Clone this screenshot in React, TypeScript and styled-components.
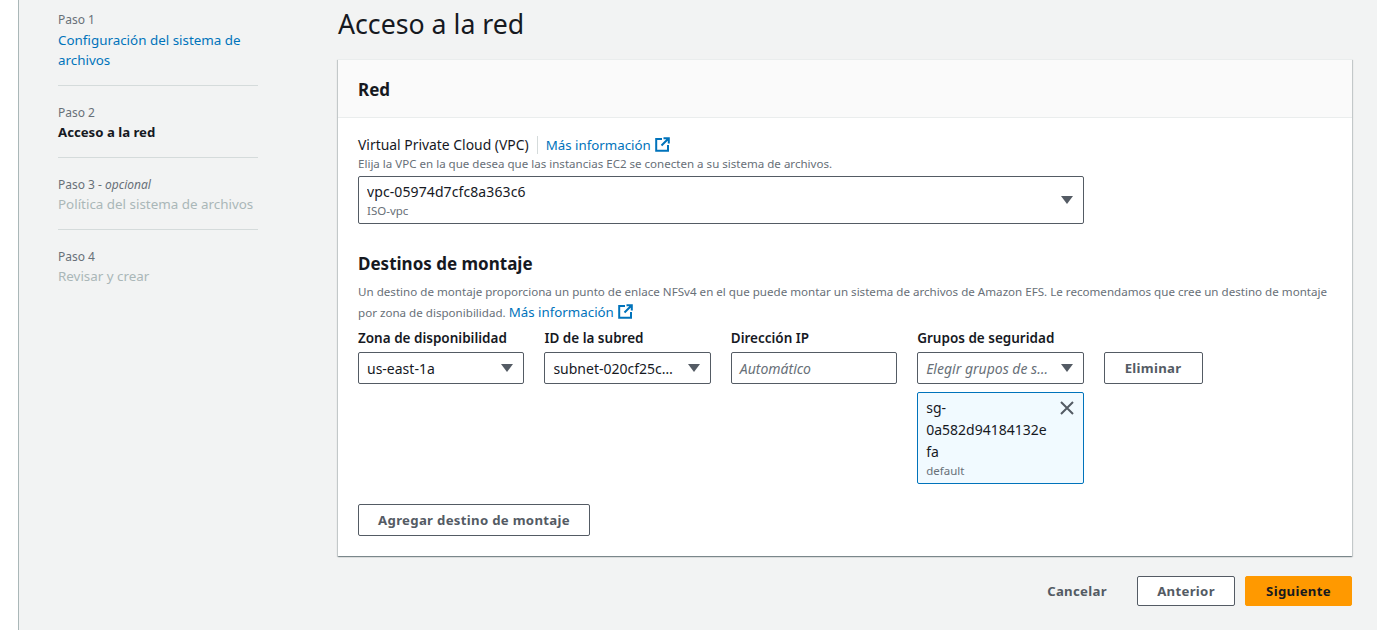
import * as React from 'react'
import styled, { createGlobalStyle } from 'styled-components'

const GlobalStyle = createGlobalStyle`
  html, body {
    margin: 0;
    padding: 0;
    height: 630px;
    overflow: hidden;
    background: #fff;
    color: #16191f;
    font-family: 'Noto Sans', 'Liberation Sans', sans-serif;
    font-size: 14px;
    line-height: 20px;
  }
  * { box-sizing: border-box; }
`

const Shell = styled.div`
  margin-left: 18px;
  height: 630px;
  border-left: 1px solid #aab7b8;
  background: #f2f3f3;
  padding: 9px 25px 0 39px;
  display: grid;
  grid-template-columns: 200px 1014px;
  column-gap: 80px;
  align-items: start;
`

const Steps = styled.ol`
  list-style: none;
  margin: 0;
  padding: 1px 0 0;
`

const StepLabel = styled.div`
  font-size: 12px;
  line-height: 19px;
  color: #687078;
  em { font-style: italic; }
`

const Step = styled.li`
  padding: 17px 0 15px;
  border-bottom: 1px solid #d5dbdb;
  &:first-child { padding-top: 0; }
  &:first-child ${StepLabel} { margin-bottom: 1px; }
  &:last-child { border-bottom: 0; }
`

const StepName = styled.div<{ $state: 'link' | 'active' | 'disabled' }>`
  font-size: ${(p) => (p.$state === 'active' ? '13.2px' : '13.4px')};
  line-height: 20px;
  font-weight: ${(p) => (p.$state === 'active' ? 700 : 400)};
  color: ${(p) =>
    p.$state === 'link' ? '#0073bb' : p.$state === 'active' ? '#16191f' : '#aab7b8'};
`

const Main = styled.main`
  display: flex;
  flex-direction: column;
`

const PageTitle = styled.h1`
  margin: 0;
  font-size: 26.7px;
  line-height: 30px;
  font-weight: 400;
  height: 50px;
  color: #16191f;
`

const Card = styled.section`
  background: #fff;
  border-top: 1px solid #eaeded;
  box-shadow: 0 1px 1px 0 rgba(0, 28, 36, 0.3), 1px 1px 1px 0 rgba(0, 28, 36, 0.15),
    -1px 1px 1px 0 rgba(0, 28, 36, 0.15);
`

const CardHeader = styled.header`
  height: 58px;
  padding: 1px 20px 0;
  display: flex;
  align-items: center;
  background: #fafafa;
  border-bottom: 1px solid #eaeded;
`

const CardTitle = styled.h2`
  margin: 1px 0 0;
  font-size: 17px;
  line-height: 22px;
  font-weight: 700;
`

const CardBody = styled.div`
  padding: 17px 20px 20px;
`

const LabelRow = styled.div`
  display: flex;
  align-items: center;
  height: 20px;
`

const VpcLabel = styled.span`
  font-size: 13.9px;
  padding-right: 8px;
  border-right: 1px solid #d5dbdb;
  line-height: 18px;
`

const InfoLink = styled.a`
  color: #0073bb;
  font-size: 13.3px;
  line-height: 20px;
  white-space: nowrap;
`

const VpcInfo = styled(InfoLink)`
  margin-left: 8px;
`

const Hint = styled.div`
  font-size: 11.55px;
  line-height: 18px;
  color: #687078;
`

const SelectBox = styled.div<{ $tall?: boolean }>`
  height: ${(p) => (p.$tall ? '48px' : '32px')};
  width: ${(p) => (p.$tall ? '726px' : '100%')};
  margin-top: ${(p) => (p.$tall ? '3px' : '0')};
  background: #fff;
  border: 1px solid #545b64;
  border-radius: 2px;
  padding: 0 10px 0 8px;
  display: flex;
  align-items: center;
  justify-content: space-between;
  gap: 8px;
`

const SelectText = styled.div`
  min-width: 0;
  padding-top: 1px;
  white-space: nowrap;
  overflow: hidden;
  text-overflow: ellipsis;
`

const TallText = styled(SelectText)`
  letter-spacing: 0.1px;
`

const Placeholder = styled(SelectText)`
  font-style: italic;
  color: #687078;
`

const SubText = styled.div`
  font-size: 11.5px;
  line-height: 16px;
  letter-spacing: 0;
  color: #687078;
`

const TallSub = styled(SubText)`
  margin-top: 1px;
`

const Caret = styled.svg`
  flex: none;
  width: 12px;
  height: 8px;
  fill: #545b64;
`

const SectionTitle = styled.h3`
  margin: 28px 0 0;
  font-size: 17px;
  line-height: 24px;
  font-weight: 700;
`

const SectionText = styled.p`
  margin: 6px 0 0;
  font-size: 11.6px;
  line-height: 20px;
  height: 40px;
  color: #687078;
`

const TargetGrid = styled.div`
  margin-top: 6px;
  display: grid;
  grid-template-columns: repeat(4, 166.4px) 99px;
  column-gap: 20px;
  align-items: start;
`

const Field = styled.div`
  display: flex;
  flex-direction: column;
  gap: 4px;
`

const FieldLabel = styled.label`
  font-size: 13.5px;
  line-height: 20px;
  font-weight: 600;
`

const TextInput = styled.div`
  height: 32px;
  border: 1px solid #545b64;
  border-radius: 2px;
  background: #fff;
  padding: 1px 8px 0;
  display: flex;
  align-items: center;
  font-style: italic;
  font-size: 14px;
  color: #687078;
`

const Token = styled.div`
  margin-top: 4px;
  height: 92px;
  padding: 4px 8px;
  background: #f1faff;
  border: 1px solid #0073bb;
  border-radius: 2px;
  display: flex;
  justify-content: space-between;
  color: #16191f;
`

const TokenText = styled.div`
  width: 124px;
  line-height: 22px;
  font-size: 14px;
`

const Close = styled.svg`
  flex: none;
  width: 14px;
  height: 14px;
  margin: 4px 1px 0 0;
  stroke: #545b64;
  stroke-width: 2;
  fill: none;
`

const Button = styled.button<{ $variant?: 'normal' | 'primary' | 'link'; $width?: number }>`
  height: 32px;
  width: ${(p) => (p.$width ? `${p.$width}px` : 'auto')};
  padding: 0;
  border-radius: 2px;
  font-family: inherit;
  font-size: 13.2px;
  line-height: 20px;
  font-weight: 700;
  letter-spacing: 0.3px;
  cursor: pointer;
  color: ${(p) => (p.$variant === 'primary' ? '#16191f' : '#545b64')};
  background: ${(p) =>
    p.$variant === 'primary' ? '#ff9900' : p.$variant === 'link' ? 'transparent' : '#fff'};
  border: 1px solid
    ${(p) =>
      p.$variant === 'primary' ? '#ff9900' : p.$variant === 'link' ? 'transparent' : '#545b64'};
`

const RemoveButton = styled(Button)`
  margin-top: 24px;
`

const AddButton = styled(Button)`
  margin-top: 20px;
  display: block;
`

const Actions = styled.div`
  margin-top: 20px;
  display: flex;
  justify-content: flex-end;
  gap: 10px;
  ${Button} { height: 30px; }
`

const CancelButton = styled(Button)`
  margin-right: 10px;
`

const ExternalIcon = styled.svg`
  width: 15px;
  height: 15px;
  margin-left: 4px;
  vertical-align: -2px;
  fill: none;
  stroke: #0073bb;
  stroke-width: 2;
`

function External() {
  return (
    <ExternalIcon viewBox="0 0 15 15">
      <path d="M7 2H1.2v11.8H13V8" />
      <path d="M8.5 1.2h5.3v5.3M13.5 1.5L6.5 8.5" />
    </ExternalIcon>
  )
}

function DownCaret() {
  return (
    <Caret viewBox="0 0 12 8">
      <path d="M0 0h12L6 8z" />
    </Caret>
  )
}

const targets = [
  { label: 'Zona de disponibilidad', value: 'us-east-1a' },
  { label: 'ID de la subred', value: 'subnet-020cf25c…' },
]

export default function App() {
  return (
    <>
      <GlobalStyle />
      <Shell>
        <Steps>
          <Step>
            <StepLabel>Paso 1</StepLabel>
            <StepName $state="link">Configuración del sistema de archivos</StepName>
          </Step>
          <Step>
            <StepLabel>Paso 2</StepLabel>
            <StepName $state="active">Acceso a la red</StepName>
          </Step>
          <Step>
            <StepLabel>
              Paso 3 - <em>opcional</em>
            </StepLabel>
            <StepName $state="disabled">Política del sistema de archivos</StepName>
          </Step>
          <Step>
            <StepLabel>Paso 4</StepLabel>
            <StepName $state="disabled">Revisar y crear</StepName>
          </Step>
        </Steps>
        <Main>
          <PageTitle>Acceso a la red</PageTitle>
          <Card>
            <CardHeader>
              <CardTitle>Red</CardTitle>
            </CardHeader>
            <CardBody>
              <LabelRow>
                <VpcLabel>Virtual Private Cloud (VPC)</VpcLabel>
                <VpcInfo>
                  Más información
                  <External />
                </VpcInfo>
              </LabelRow>
              <Hint>Elija la VPC en la que desea que las instancias EC2 se conecten a su sistema de archivos.</Hint>
              <SelectBox $tall>
                <TallText>
                  vpc-05974d7cfc8a363c6
                  <TallSub>ISO-vpc</TallSub>
                </TallText>
                <DownCaret />
              </SelectBox>
              <SectionTitle>Destinos de montaje</SectionTitle>
              <SectionText>
                Un destino de montaje proporciona un punto de enlace NFSv4 en el que puede montar un sistema de
                archivos de Amazon EFS. Le recomendamos que cree un destino de montaje por zona de disponibilidad.{' '}
                <InfoLink>
                  Más información
                  <External />
                </InfoLink>
              </SectionText>
              <TargetGrid>
                {targets.map((t) => (
                  <Field key={t.label}>
                    <FieldLabel>{t.label}</FieldLabel>
                    <SelectBox>
                      <SelectText>{t.value}</SelectText>
                      <DownCaret />
                    </SelectBox>
                  </Field>
                ))}
                <Field>
                  <FieldLabel>Dirección IP</FieldLabel>
                  <TextInput>Automático</TextInput>
                </Field>
                <Field>
                  <FieldLabel>Grupos de seguridad</FieldLabel>
                  <SelectBox>
                    <Placeholder>Elegir grupos de s…</Placeholder>
                    <DownCaret />
                  </SelectBox>
                  <Token>
                    <TokenText>
                      sg-
                      <br />
                      0a582d94184132e
                      <br />
                      fa
                      <SubText>default</SubText>
                    </TokenText>
                    <Close viewBox="0 0 14 14">
                      <path d="M1 1l12 12M13 1L1 13" />
                    </Close>
                  </Token>
                </Field>
                <RemoveButton>Eliminar</RemoveButton>
              </TargetGrid>
              <AddButton $width={232}>Agregar destino de montaje</AddButton>
            </CardBody>
          </Card>
          <Actions>
            <CancelButton $variant="link" $width={80}>
              Cancelar
            </CancelButton>
            <Button $width={98}>Anterior</Button>
            <Button $variant="primary" $width={107}>
              Siguiente
            </Button>
          </Actions>
        </Main>
      </Shell>
    </>
  )
}
